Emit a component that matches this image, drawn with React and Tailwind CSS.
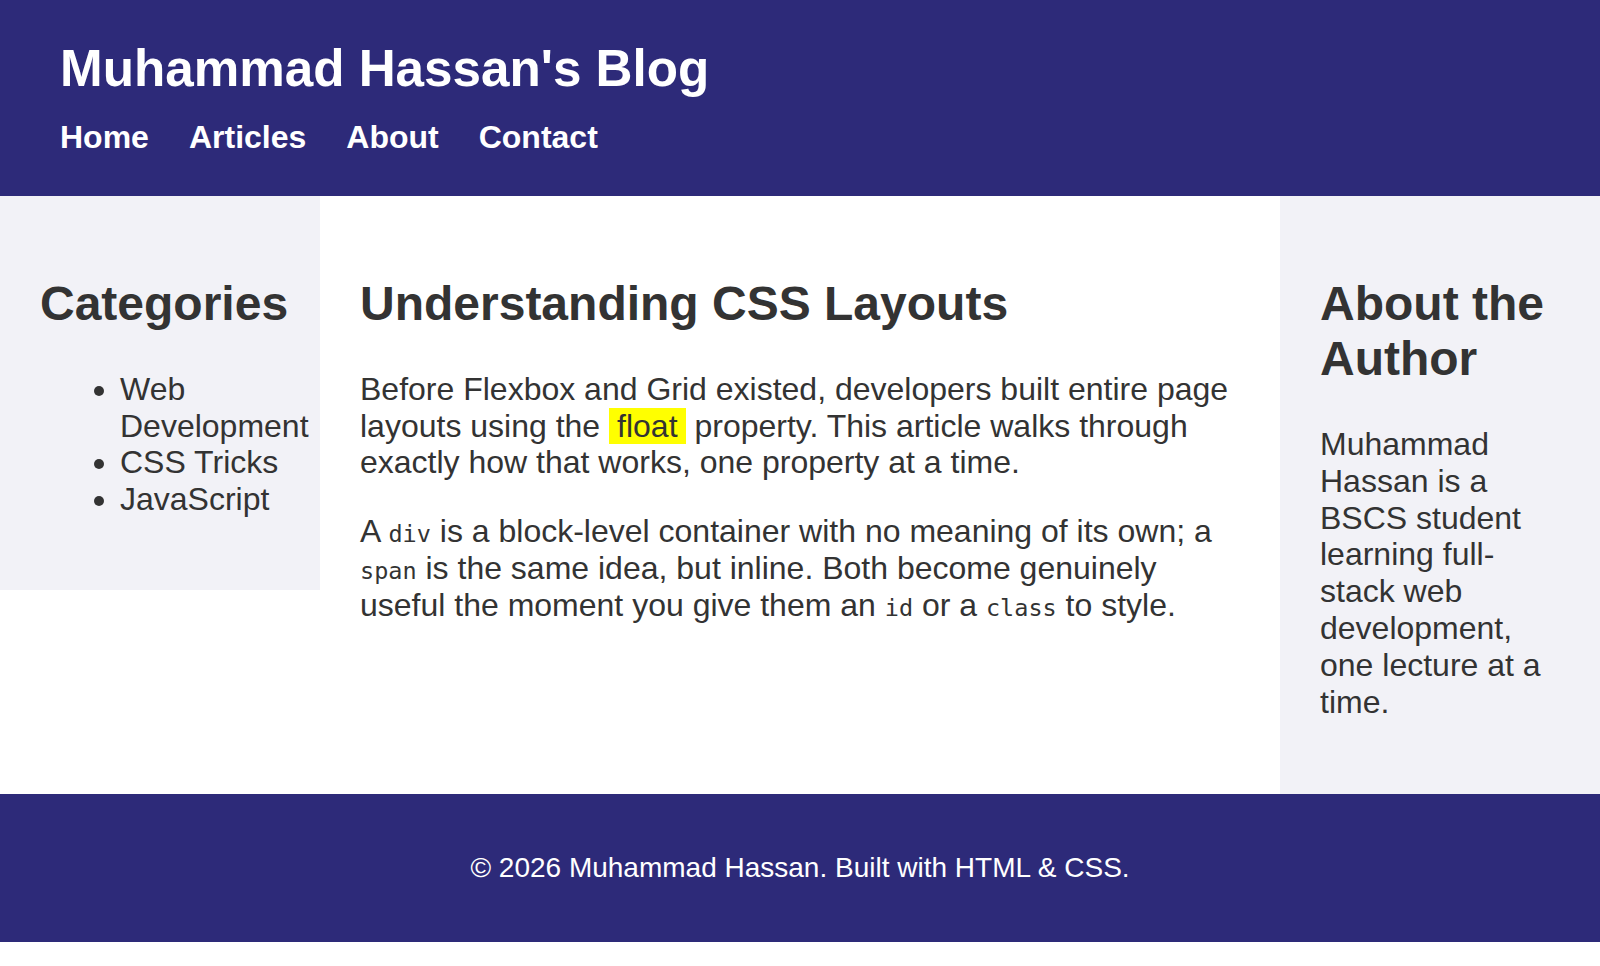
import React from "react"

const categories = ["Web Development", "CSS Tricks", "JavaScript"]
const navLinks = ["Home", "Articles", "About", "Contact"]

function Code({ children }) {
  return <code className="font-['DejaVu_Sans_Mono',monospace] text-[23.5px] leading-none">{children}</code>
}

export default function App() {
  return (
    <div className="font-['Liberation_Sans',Arial,sans-serif] text-[32px] leading-[36.8px] text-[#333] bg-white">
      {/* header */}
      <header className="bg-[#2d2a79] px-[60px] pt-[40px] pb-[40px]">
        <h1 className="text-[51.2px] leading-[58.8px] font-bold text-white">Muhammad Hassan's Blog</h1>
        <nav className="mt-[20px] flex gap-[40px]">
          {navLinks.map((link) => (
            <a key={link} href="#" className="font-bold text-white">
              {link}
            </a>
          ))}
        </nav>
      </header>

      {/* three columns */}
      <div className="flex items-start">
        <aside className="w-[320px] shrink-0 bg-[#f2f2f7] p-[40px]">
          <h2 className="mt-[40px] mb-[40px] text-[48px] leading-[55.2px] font-bold">Categories</h2>
          <ul className="mb-[32px] list-disc pl-[80px]">
            {categories.map((c) => (
              <li key={c}>{c}</li>
            ))}
          </ul>
        </aside>

        <main className="w-[960px] shrink-0 p-[40px]">
          <h2 className="mt-[40px] mb-[40px] text-[48px] leading-[55.2px] font-bold">Understanding CSS Layouts</h2>
          <p className="mb-[32px]">
            Before Flexbox and Grid existed, developers built entire page layouts using the{" "}
            <span className="bg-[#ffff00] px-[8px]">float</span> property. This article walks through exactly how
            that works, one property at a time.
          </p>
          <p className="mb-[32px]">
            A <Code>div</Code> is a block-level container with no meaning of its own; a <Code>span</Code> is the
            same idea, but inline. Both become genuinely useful the moment you give them an <Code>id</Code> or a{" "}
            <Code>class</Code> to style.
          </p>
        </main>

        <aside className="w-[320px] shrink-0 bg-[#f2f2f7] p-[40px] pb-[42px]">
          <h2 className="mt-[40px] mb-[40px] text-[48px] leading-[55.2px] font-bold">About the Author</h2>
          <p className="mb-[32px]">
            Muhammad Hassan is a BSCS student learning full-stack web development, one lecture at a time.
          </p>
        </aside>
      </div>

      <footer className="bg-[#2d2a79] py-[58px] text-center text-[28px] leading-[32px] text-white">
        © 2026 Muhammad Hassan. Built with HTML &amp; CSS.
      </footer>
    </div>
  )
}
